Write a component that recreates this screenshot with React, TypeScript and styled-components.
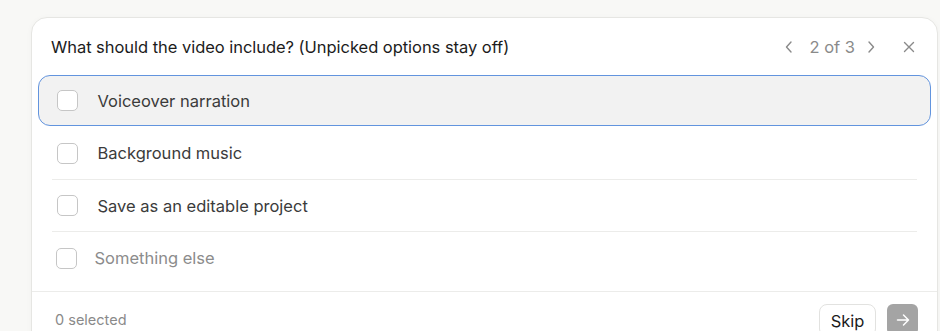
import React from "react";
import styled, { createGlobalStyle } from "styled-components";

const Global = createGlobalStyle`
  html, body { margin: 0; padding: 0; background: #f8f8f6; }
  body { font-family: Inter, "Noto Sans", sans-serif; -webkit-font-smoothing: antialiased; }
  * { box-sizing: border-box; }
`;

const Page = styled.div`
  padding: 17px 2px 0 31px;
  height: 331px;
  overflow: hidden;
`;

const Card = styled.div`
  width: 907px;
  background: #ffffff;
  border: 1px solid #e6e6e3;
  border-radius: 16px;
  box-shadow: 0 1px 6px rgba(0, 0, 0, 0.03);
`;

const Header = styled.div`
  display: flex;
  align-items: center;
  justify-content: space-between;
  padding: 16px 20px 16px 19px;
  height: 57px;
`;

const Title = styled.div`
  font-size: 16.5px;
  line-height: 24px;
  color: #1c1c1c;
  letter-spacing: -0.04px;
`;

const Nav = styled.div`
  display: flex;
  align-items: center;
  color: #8a8a8a;
  font-size: 16.5px;
`;

const NavIcon = styled.span<{ $gap?: number }>`
  display: inline-flex;
  align-items: center;
  justify-content: center;
  width: 16px;
  height: 24px;
  margin-left: ${(p) => p.$gap ?? 0}px;
`;

const Count = styled.span`
  margin: 0 8px 0 12px;
  line-height: 24px;
`;

const List = styled.div`
  display: flex;
  flex-direction: column;
  padding: 0 6px 7px;
`;

const Row = styled.div<{ $active?: boolean; $h?: number }>`
  display: flex;
  align-items: center;
  height: ${(p) => p.$h ?? 51}px;
  padding-left: 17.5px;
  border-radius: 12px;
  border: ${(p) => (p.$active ? "1.5px solid #6294de" : "1.5px solid transparent")};
  background: ${(p) => (p.$active ? "#f2f2f2" : "transparent")};
`;

const Box = styled.span<{ $shift?: number }>`
  flex: none;
  width: 21px;
  height: 21px;
  border: 1.5px solid #c6c6c6;
  border-radius: 5px;
  background: #fff;
  margin-left: ${(p) => p.$shift ?? 0}px;
`;

const Label = styled.span<{ $muted?: boolean; $gap?: number }>`
  margin-left: ${(p) => p.$gap ?? 20}px;
  font-size: 16.5px;
  line-height: 24px;
  color: ${(p) => (p.$muted ? "#8c8c8c" : "#3b3b3b")};
`;

const Divider = styled.div<{ $hidden?: boolean }>`
  height: 1px;
  margin: 0 14px;
  background: ${(p) => (p.$hidden ? "transparent" : "#ececea")};
`;

const Footer = styled.div`
  display: flex;
  align-items: flex-start;
  justify-content: space-between;
  border-top: 1px solid #ececea;
  padding: 12px 19px 12px 23px;
`;

const Selected = styled.span`
  font-size: 14.5px;
  line-height: 20px;
  color: #8a8a8a;
  margin-top: 6px;
`;

const Actions = styled.div`
  display: flex;
  gap: 11px;
`;

const SkipButton = styled.button`
  height: 33px;
  width: 57px;
  padding: 0;
  border: 1px solid #e2e2e0;
  border-radius: 8px;
  background: #fff;
  font-family: inherit;
  font-size: 16.5px;
  color: #1c1c1c;
`;

const GoButton = styled.button`
  width: 31px;
  height: 31px;
  padding: 0;
  border: none;
  border-radius: 6px;
  background: #a4a4a4;
  display: flex;
  align-items: center;
  justify-content: center;
`;

const Chevron = ({ dir }: { dir: "l" | "r" }) => (
  <svg width="10" height="14" viewBox="0 0 10 14" fill="none" stroke="#8a8a8a" strokeWidth="1.4" strokeLinecap="round" strokeLinejoin="round">
    {dir === "l" ? <path d="M7 2 L2.5 7 L7 12" /> : <path d="M3 2 L7.5 7 L3 12" />}
  </svg>
);

const options = [
  { label: "Voiceover narration", active: true, h: 51 },
  { label: "Background music", h: 52 },
  { label: "Save as an editable project", h: 51 },
];

export default function App() {
  return (
    <>
      <Global />
      <Page>
        <Card>
          <Header>
            <Title>What should the video include? (Unpicked options stay off)</Title>
            <Nav>
              <NavIcon><Chevron dir="l" /></NavIcon>
              <Count>2 of 3</Count>
              <NavIcon><Chevron dir="r" /></NavIcon>
              <NavIcon $gap={22}>
                <svg width="12" height="12" viewBox="0 0 12 12" fill="none" stroke="#8a8a8a" strokeWidth="1.4" strokeLinecap="round">
                  <path d="M1.5 1.5 L10.5 10.5 M10.5 1.5 L1.5 10.5" />
                </svg>
              </NavIcon>
            </Nav>
          </Header>
          <List>
            {options.map((o, i) => (
              <React.Fragment key={o.label}>
                <Row $active={o.active} $h={o.h}>
                  <Box />
                  <Label>{o.label}</Label>
                </Row>
                <Divider $hidden={i === 0} />
              </React.Fragment>
            ))}
            <Row $h={52}>
              <Box $shift={-1} />
              <Label $muted $gap={18}>Something else</Label>
            </Row>
          </List>
          <Footer>
            <Selected>0 selected</Selected>
            <Actions>
              <SkipButton>Skip</SkipButton>
              <GoButton>
                <svg width="16" height="16" viewBox="0 0 16 16" fill="none" stroke="#ffffff" strokeWidth="1.5" strokeLinecap="round" strokeLinejoin="round">
                  <path d="M2.5 8 H13.5 M8.5 3 L13.5 8 L8.5 13" />
                </svg>
              </GoButton>
            </Actions>
          </Footer>
        </Card>
      </Page>
    </>
  );
}
